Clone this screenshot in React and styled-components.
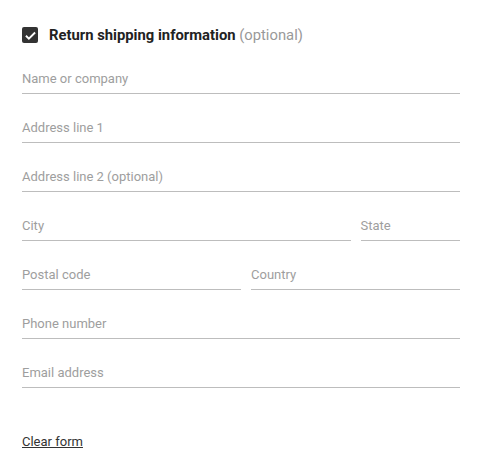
import React from 'react'
import styled, { createGlobalStyle } from 'styled-components'

const Global = createGlobalStyle`
body {
  margin: 0;
  background: #fff;
  font-family: Roboto, "Liberation Sans", Arial, sans-serif;
}
`

const Form = styled.div`
padding: 27px 20px 0 22px;
width: 438px;
`

const Header = styled.label`
display: flex;
align-items: center;
height: 16px;
margin-bottom: 2px;
`

const Box = styled.span`
width: 16px;
height: 16px;
border-radius: 2px;
background: #333;
display: flex;
align-items: center;
justify-content: center;
margin-right: 11px;
`

const Title = styled.span`
font-size: 14.8px;
font-weight: 700;
color: #222;
`

const Optional = styled.span`
font-weight: 400;
color: #999;
`

const Row = styled.div`
display: flex;
`

const Field = styled.div`
box-sizing: border-box;
height: 49px;
padding-top: 26px;
border-bottom: 1px solid #bdbdbd;
width: ${p => p.$width || '100%'};
flex: ${p => (p.$grow ? 1 : 'none')};
margin-left: ${p => (p.$grow ? '10px' : '0')};
`

const Label = styled.div`
font-size: 13px;
line-height: 15px;
color: #9e9e9e;
`

const Clear = styled.a`
display: inline-block;
margin-top: 46px;
font-size: 13px;
line-height: 15px;
color: #333;
text-decoration: underline;
`

export default class App extends React.Component {
  render() {
    return <>
      <Global />
      <Form>
        <Header>
          <Box>
            <svg width="13" height="13" viewBox="0 0 24 24">
              <path d="M3.5 12.5l5.5 5.5L20.5 6.5" fill="none" stroke="#fff" strokeWidth="3.4" />
            </svg>
          </Box>
          <Title>Return shipping information <Optional>(optional)</Optional></Title>
        </Header>
        <Field><Label>Name or company</Label></Field>
        <Field><Label>Address line 1</Label></Field>
        <Field><Label>Address line 2 (optional)</Label></Field>
        <Row>
          <Field $width="75%"><Label>City</Label></Field>
          <Field $grow><Label>State</Label></Field>
        </Row>
        <Row>
          <Field $width="50%"><Label>Postal code</Label></Field>
          <Field $grow><Label>Country</Label></Field>
        </Row>
        <Field><Label>Phone number</Label></Field>
        <Field><Label>Email address</Label></Field>
        <Clear>Clear form</Clear>
      </Form>
    </>
  }
}
